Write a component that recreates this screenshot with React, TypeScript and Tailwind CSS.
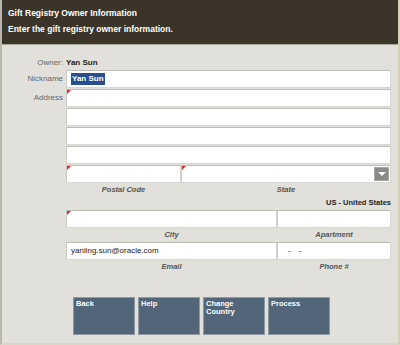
import React from 'react';

const Req = () => (
  <span className="absolute left-0 top-0 w-0 h-0 border-t-[4px] border-t-[#e8202a] border-r-[4px] border-r-transparent" />
);

const Field = ({
  className = '',
  required = false,
  children,
}: {
  className?: string;
  required?: boolean;
  children?: React.ReactNode;
}) => (
  <div
    className={`relative h-[18px] bg-white border border-[#d6d6d2] border-t-[#bdbdb8] border-l-[#cacac6] flex items-center px-[6px] text-[8px] text-[#222] ${className}`}
  >
    {required && <Req />}
    {children}
  </div>
);

const Caption = ({ children, className = '' }: { children: React.ReactNode; className?: string }) => (
  <div className={`text-center italic font-bold text-[7.5px] text-[#555] h-[14px] leading-[14px] ${className}`}>{children}</div>
);

const buttons = [['Back'], ['Help'], ['Change', 'Country'], ['Process']];

export default function App() {
  return (
    <div
      className="w-[400px] h-[345px] bg-[#e2e0da] flex flex-col border-l-2 border-l-[#b8b7b0] border-r-2 border-r-[#d6d2b8] border-b-2 border-b-[#d8d6c6]"
      style={{ fontFamily: '"Liberation Sans", Arial, sans-serif' }}
    >
      {/* Header */}
      <div className="h-[45px] bg-[#3a3429] border-b border-b-[#a9a69c] px-[6px] pt-[7px] text-white font-bold">
        <div className="text-[8.5px] leading-[12px]">Gift Registry Owner Information</div>
        <div className="text-[8.5px] leading-[12px] mt-[4px]">Enter the gift registry owner information.</div>
      </div>

      <div className="flex flex-col pl-[64px] pr-[7px] pt-[12px]">
        {/* Owner */}
        <div className="flex items-center h-[12px] text-[8px]">
          <div className="w-[62px] -ml-[62px] text-right pr-[3px] text-[#666]">Owner:</div>
          <div className="font-bold text-[#222]">Yan Sun</div>
        </div>

        {/* Nickname */}
        <div className="flex mt-[1px]">
          <div className="w-[62px] -ml-[62px] text-right pr-[3px] text-[8px] text-[#666] pt-[3px]">Nickname</div>
          <Field className="flex-1 !px-[4px]">
            <span className="bg-[#2a4f8f] text-white font-bold px-[1px]">Yan Sun</span>
          </Field>
        </div>

        {/* Address */}
        <div className="flex mt-[1px]">
          <div className="w-[62px] -ml-[62px] text-right pr-[3px] text-[8px] text-[#666] pt-[3px]">Address</div>
          <div className="flex-1 flex flex-col gap-[1px]">
            <Field required />
            <Field />
            <Field />
            <Field />
          </div>
        </div>

        {/* Postal / State */}
        <div className="flex mt-[1px]">
          <Field required className="w-[115px]" />
          <Field required className="flex-1 !pr-[1px] justify-end">
            <div className="w-[15px] h-[14px] bg-[#8a8a88] border border-[#a8a8a6] flex items-center justify-center">
              <span className="w-0 h-0 border-l-[4px] border-l-transparent border-r-[4px] border-r-transparent border-t-[4px] border-t-white" />
            </div>
          </Field>
        </div>
        <div className="flex">
          <Caption className="w-[115px]">Postal Code</Caption>
          <Caption className="flex-1">State</Caption>
        </div>
        <div className="text-right font-bold text-[7.5px] text-[#222] h-[12px] leading-[12px]">US - United States</div>

        {/* City / Apartment */}
        <div className="flex mt-[1px]">
          <Field required className="w-[211px]" />
          <Field className="flex-1" />
        </div>
        <div className="flex">
          <Caption className="w-[211px]">City</Caption>
          <Caption className="flex-1">Apartment</Caption>
        </div>

        {/* Email / Phone */}
        <div className="flex">
          <Field className="w-[211px] !px-[4px]">yanling.sun@oracle.com</Field>
          <Field className="flex-1 !px-[10px]">
            <span className="tracking-[3px]">- -</span>
          </Field>
        </div>
        <div className="flex">
          <Caption className="w-[211px]">Email</Caption>
          <Caption className="flex-1">Phone #</Caption>
        </div>
      </div>

      {/* Buttons */}
      <div className="flex gap-[3px] pl-[71px] mt-[23px]">
        {buttons.map((b) => (
          <div
            key={b.join(' ')}
            className="w-[62px] h-[38px] bg-[#536679] border border-[#8e9aa5] px-[2px] pt-[2px] text-white font-bold text-[7.5px] leading-[8px]"
          >
            {b.map((l) => (
              <div key={l}>{l}</div>
            ))}
          </div>
        ))}
      </div>
    </div>
  );
}
